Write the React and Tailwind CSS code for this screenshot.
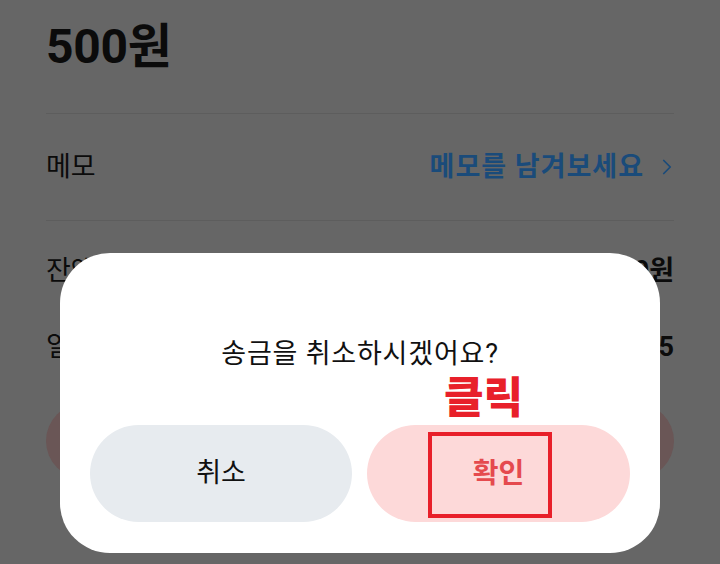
import { ChevronRight } from "lucide-react";

// 송금 상세 화면 위에 '송금 취소' 확인 다이얼로그가 떠 있는 상태
const FONT = { fontFamily: "Roboto, 'Noto Sans CJK KR', sans-serif" };

function Row({ label, children, className = "" }) {
  return (
    <div className={`flex items-center justify-between ${className}`}>
      <span className="text-[27px] text-[#0b0b0b]">{label}</span>
      {children}
    </div>
  );
}

export default function App() {
  return (
    <div className="relative w-[720px] h-[564px] overflow-hidden bg-[#666666]" style={FONT}>
      {/* 뒤쪽 화면 (딤 처리된 상태) */}
      <div className="flex flex-col px-[46px] pt-[18px]">
        <h1 className="text-[48px] font-bold leading-[58px] text-[#0b0b0b] tracking-[-0.3px]">500원</h1>

        <div className="mt-[37px] border-t border-[#5d5d5d]" />
        <Row label="메모" className="h-[106px]">
          <div className="flex items-center gap-[10px] text-[#1a4b7a]">
            <span className="text-[27px] font-bold tracking-[1px]">메모를 남겨보세요</span>
            <ChevronRight size={26} strokeWidth={1.6} className="mr-[-6px]" />
          </div>
        </Row>
        <div className="border-t border-[#5d5d5d]" />

        <Row label="잔액" className="h-[76px] mt-[12px]">
          <span className="text-[27px] font-bold text-[#0b0b0b]">0원</span>
        </Row>
        <Row label="일시" className="h-[76px]">
          <span className="text-[27px] font-bold text-[#0b0b0b]">5</span>
        </Row>

        <div className="mt-[18px] h-[76px] rounded-full bg-[#6a5656]" />
      </div>

      {/* 확인 다이얼로그 */}
      <div className="absolute left-[60px] top-[253px] w-[600px] h-[300px] rounded-[50px] bg-white flex flex-col items-center">
        <p className="mt-[83px] text-[27px] tracking-[0.8px] text-[#111] leading-[36px]">송금을 취소하시겠어요?</p>
        <div className="mt-[53px] flex gap-[15px]">
          <button className="w-[262px] h-[97px] rounded-full bg-[#e7ebef] text-[27px] text-[#111]">취소</button>
          <button className="w-[263px] h-[97px] rounded-full bg-[#fdd9d9] text-[28px] font-bold text-[#e54a4e]">확인</button>
        </div>
      </div>

      {/* 클릭 안내 표시 */}
      <span className="absolute left-[444px] top-[370px] text-[43px] font-black leading-[56px] text-[#e8202a]">클릭</span>
      <div className="absolute left-[428px] top-[432px] w-[124px] h-[86px] border-[4px] border-[#e8202a]" />
    </div>
  );
}
